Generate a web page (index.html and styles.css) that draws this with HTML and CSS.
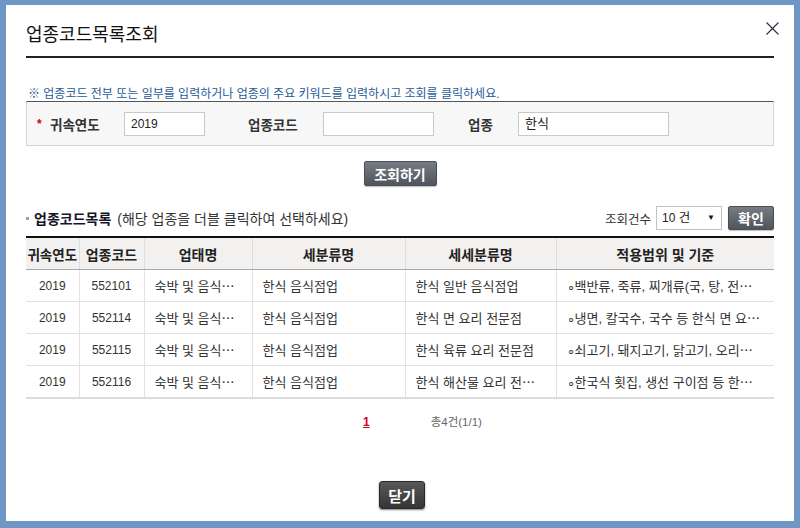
FILE: index.html
```html
<!DOCTYPE html>
<html lang="ko">
<head>
<meta charset="utf-8">
<title>업종코드목록조회</title>
<link rel="stylesheet" href="styles.css">
</head>
<body>
<div class="modal">
  <div class="head">
    <h1 class="title">업종코드목록조회</h1>
    <button class="close" aria-label="닫기">
      <svg width="13" height="13" viewBox="0 0 13 13"><path d="M0.5 0.5 L12.5 12.5 M12.5 0.5 L0.5 12.5" stroke="#2b2b3b" stroke-width="1.1" fill="none"/></svg>
    </button>
  </div>
  <p class="guide">※ 업종코드 전부 또는 일부를 입력하거나 업종의 주요 키워드를 입력하시고 조회를 클릭하세요.</p>
  <div class="search">
    <span class="star">*</span>
    <span class="lbl lbl-year">귀속연도</span>
    <span class="input w-year num">2019</span>
    <span class="lbl lbl-code">업종코드</span>
    <span class="input w-code"></span>
    <span class="lbl lbl-ind">업종</span>
    <span class="input w-ind">한식</span>
  </div>
  <div class="btn-row"><button class="btn btn-search">조회하기</button></div>
  <div class="list-head">
    <div class="list-title"><span class="bullet"></span><strong>업종코드목록</strong><span class="sub">(해당 업종을 더블 클릭하여 선택하세요)</span></div>
    <div class="list-ctrl"><span class="cnt">조회건수</span><div class="select"><span class="num">10</span> 건<span class="arrow">▼</span></div><button class="btn btn-ok">확인</button></div>
  </div>
  <table class="grid">
    <colgroup>
      <col class="c1"><col class="c2"><col class="c3"><col class="c4"><col class="c5"><col class="c6">
    </colgroup>
    <thead>
      <tr><th>귀속연도</th><th>업종코드</th><th>업태명</th><th>세분류명</th><th>세세분류명</th><th>적용범위 및 기준</th></tr>
    </thead>
    <tbody>
      <tr><td class="ctr">2019</td><td class="ctr">552101</td><td>숙박 및 음식⋯</td><td>한식 음식점업</td><td>한식 일반 음식점업</td><td>∘백반류, 죽류, 찌개류(국, 탕, 전⋯</td></tr>
      <tr><td class="ctr">2019</td><td class="ctr">552114</td><td>숙박 및 음식⋯</td><td>한식 음식점업</td><td>한식 면 요리 전문점</td><td>∘냉면, 칼국수, 국수 등 한식 면 요⋯</td></tr>
      <tr><td class="ctr">2019</td><td class="ctr">552115</td><td>숙박 및 음식⋯</td><td>한식 음식점업</td><td>한식 육류 요리 전문점</td><td>∘쇠고기, 돼지고기, 닭고기, 오리⋯</td></tr>
      <tr class="last"><td class="ctr">2019</td><td class="ctr">552116</td><td>숙박 및 음식⋯</td><td>한식 음식점업</td><td>한식 해산물 요리 전⋯</td><td>∘한국식 횟집, 생선 구이점 등 한⋯</td></tr>
    </tbody>
  </table>
  <div class="paging"><a class="page-on">1</a><span class="total">총4건(1/1)</span></div>
  <div class="foot"><button class="btn btn-close">닫기</button></div>
</div>
</body>
</html>
```
FILE: styles.css
```css
html {
  background: #7096c6;
}
body {
  margin: 0;
}
.modal {
  box-sizing: border-box;
  position: relative;
  margin: 5px 6px 0 6px;
  width: 788px;
  height: 516px;
  padding: 0 20px;
  background: #fff;
  font-family: "Liberation Sans", "Noto Sans CJK KR", sans-serif;
  color: #333;
}
.head {
  padding: 19px 0 10px;
  border-bottom: 2px solid #222;
}
.title {
  margin: 0;
  font-size: 18px;
  line-height: 22px;
  font-weight: normal;
  color: #111;
}
.close {
  position: absolute;
  top: 17px;
  right: 15px;
  width: 13px;
  height: 13px;
  padding: 0;
  border: 0;
  background: none;
  display: block;
}
.close svg {
  display: block;
}
.guide {
  margin: 29px 0 0;
  padding-left: 2px;
  font-size: 12px;
  line-height: 14px;
  color: #1d5c99;
}
.search {
  box-sizing: border-box;
  display: flex;
  align-items: center;
  height: 45px;
  padding-left: 10px;
  border: 1px solid #d3d3d3;
  border-top-color: #555;
  background: #f7f7f7;
}
.star {
  width: 13px;
  color: #d40000;
  font-size: 12px;
  font-weight: bold;
}
.lbl {
  font-size: 13.5px;
  font-weight: bold;
  color: #333;
}
.lbl-year { width: 74px; }
.lbl-code { width: 75px; margin-left: 43px; }
.lbl-ind { width: 50px; margin-left: 34px; }
.input {
  box-sizing: border-box;
  height: 24px;
  line-height: 22px;
  padding-left: 6px;
  border: 1px solid #c9c9c9;
  background: #fff;
  font-size: 13px;
  color: #222;
}
.input.num {
  font-size: 12px;
}
.w-year { width: 81px; }
.w-code { width: 111px; }
.w-ind { width: 151px; }
.btn-row {
  margin-top: 15px;
  display: flex;
  justify-content: center;
}
.btn {
  box-sizing: border-box;
  padding: 0;
  border: 1px solid #4a4e55;
  border-radius: 2px;
  background: linear-gradient(#777c84, #50555d);
  color: #fff;
  font-family: "Liberation Sans", "Noto Sans CJK KR", sans-serif;
  font-size: 14px;
  font-weight: bold;
  box-shadow: 0 1px 1px rgba(0, 0, 0, 0.25);
}
.btn-search {
  width: 73px;
  height: 25px;
}
.list-head {
  margin-top: 20px;
  height: 24px;
  display: flex;
  justify-content: space-between;
  align-items: center;
}
.list-title {
  display: flex;
  align-items: center;
  font-size: 14px;
}
.bullet {
  width: 3px;
  height: 3px;
  background: #a0a0a0;
  margin-right: 5px;
}
.list-title strong {
  color: #14142a;
}
.sub {
  margin-left: 6px;
  color: #333;
}
.list-ctrl {
  display: flex;
  align-items: center;
  font-size: 12.5px;
}
.cnt {
  margin-right: 5px;
  color: #333;
}
.select {
  box-sizing: border-box;
  position: relative;
  width: 66px;
  height: 24px;
  line-height: 22px;
  padding-left: 5px;
  border: 1px solid #c2c2c2;
  background: #fff;
  color: #222;
}
.select .num {
  font-size: 12px;
}
.arrow {
  position: absolute;
  right: 6px;
  top: 0;
  font-size: 8px;
  color: #111;
}
.btn-ok {
  margin-left: 6px;
  width: 46px;
  height: 24px;
}
.grid {
  margin-top: 6px;
  width: 100%;
  border-collapse: collapse;
  table-layout: fixed;
  border-top: 2px solid #111;
}
.c1 { width: 53px; }
.c2 { width: 65px; }
.c3 { width: 108px; }
.c4 { width: 153px; }
.c5 { width: 151px; }
.c6 { width: 218px; }
.grid th {
  height: 31px;
  padding: 0;
  background: #f2f1ef;
  border-bottom: 1px solid #a9a9a9;
  border-left: 1px solid #dedede;
  font-size: 14px;
  font-weight: bold;
  color: #222;
  white-space: nowrap;
  overflow: hidden;
}
.grid th:first-child {
  font-size: 13.5px;
}
.grid td {
  height: 31px;
  padding: 0 0 0 10px;
  border-bottom: 1px solid #e2e2e2;
  border-left: 1px solid #e2e2e2;
  font-size: 13px;
  color: #333;
  white-space: nowrap;
  overflow: hidden;
}
.grid th:first-child,
.grid td:first-child {
  border-left: 0;
}
.grid td.ctr {
  padding: 0;
  text-align: center;
  font-size: 12px;
}
.grid tr.last td {
  border-bottom: 2px solid #dcdcdc;
}
.paging {
  margin-top: 15px;
  display: flex;
  justify-content: center;
  align-items: center;
  gap: 61px;
  padding-left: 45px;
  line-height: 16px;
}
.page-on {
  color: #d0021b;
  font-weight: bold;
  font-size: 12px;
  text-decoration: underline;
}
.total {
  font-size: 11.5px;
  color: #666;
}
.foot {
  margin-top: 51px;
  padding-left: 4px;
  display: flex;
  justify-content: center;
}
.btn-close {
  width: 46px;
  height: 28px;
  border: 1px solid #2a2a2a;
  border-radius: 3px;
  background: linear-gradient(#585858, #353535);
  box-shadow: 0 1px 2px rgba(0, 0, 0, 0.5);
  font-size: 15px;
}
```
